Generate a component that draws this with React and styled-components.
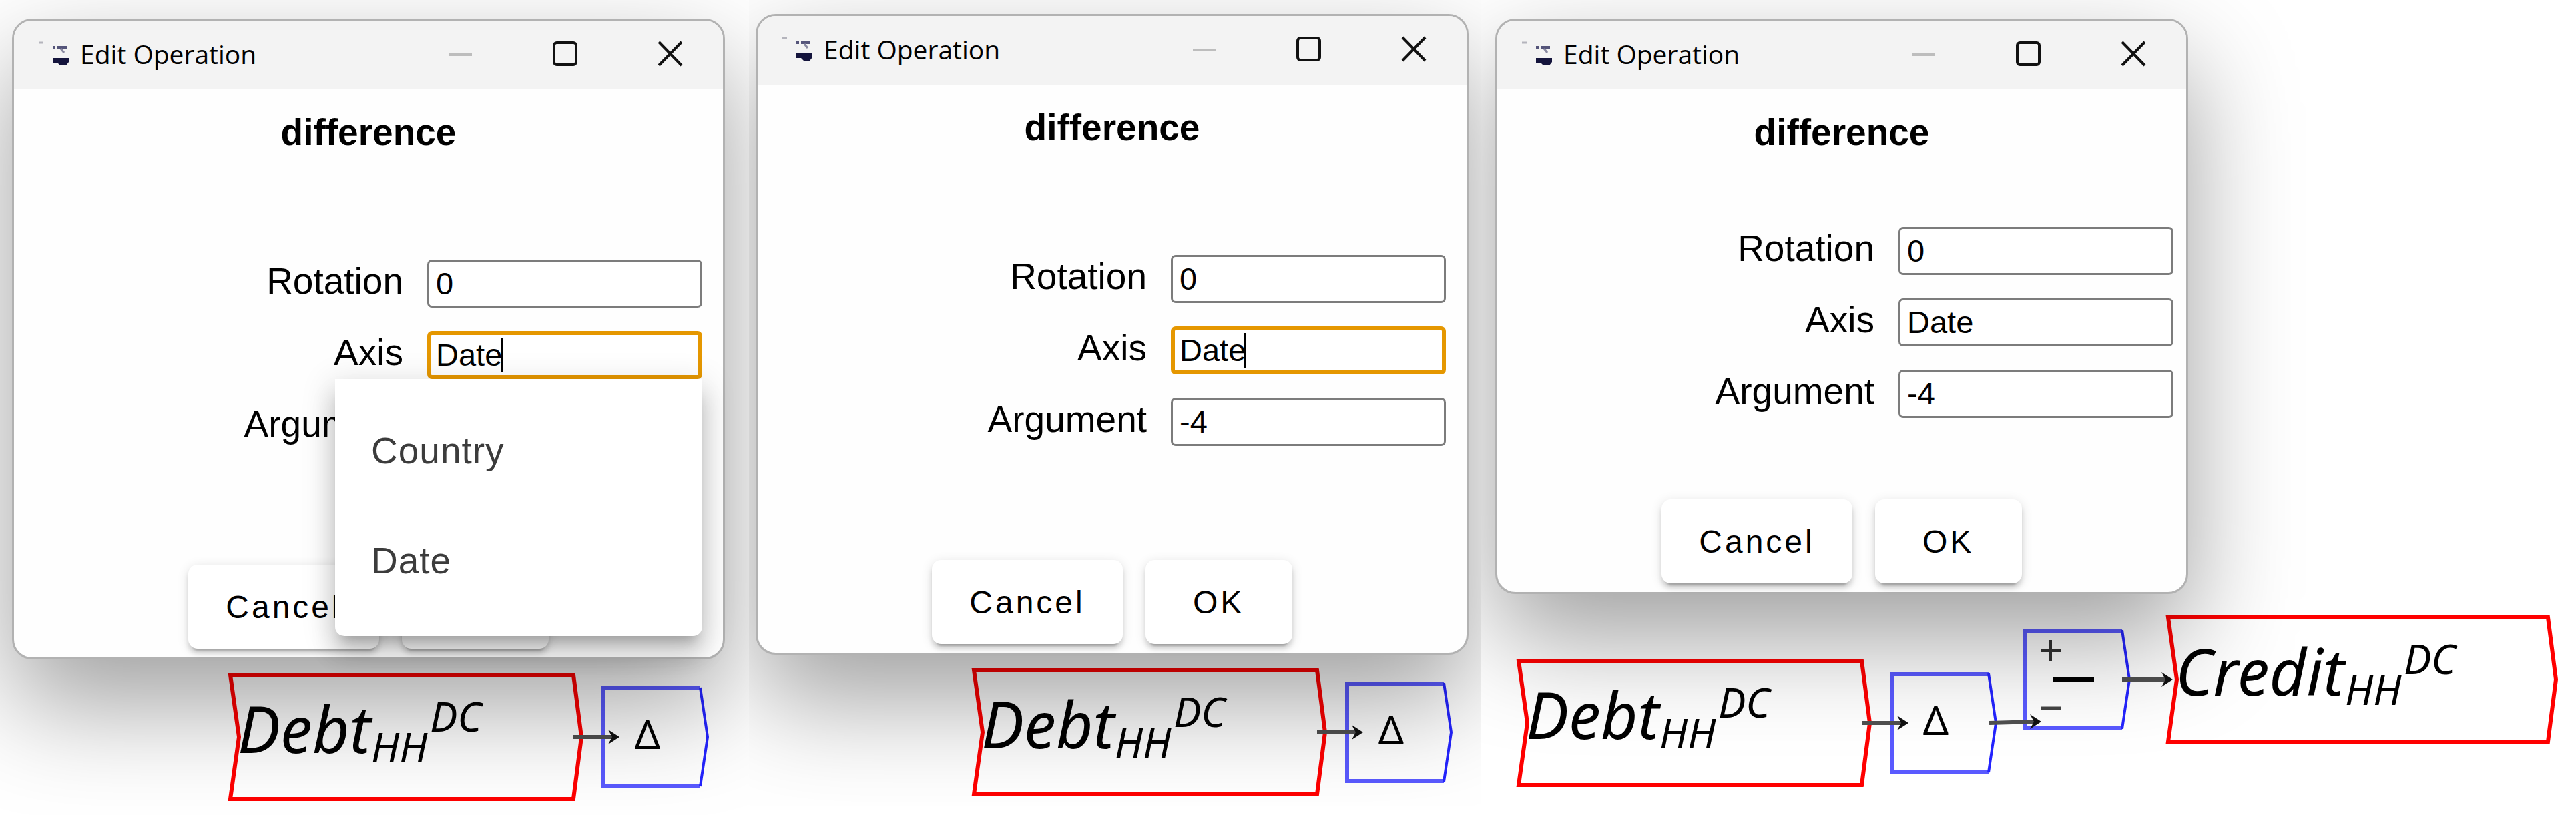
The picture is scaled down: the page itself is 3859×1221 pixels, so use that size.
import React from "react";
import styled, { createGlobalStyle, css } from "styled-components";

const GlobalStyle = createGlobalStyle`
  *, *::before, *::after { box-sizing: border-box; }
  body { margin: 0; background: #fff; }
  button, input { font: inherit; color: inherit; }
`;

const sans = `"Liberation Sans", Arial, sans-serif`;
const humanist = `"Noto Sans", "Open Sans", sans-serif`;

const Page = styled.main`
  display: grid;
  grid-template-columns: 1122fr 1097fr 1640fr;
  align-items: start;
  font-family: ${sans};
  color: #000;
`;

const Step = styled.section`
  position: relative;
  overflow: hidden;
  height: ${(p) => p.$height}px;
  padding: ${(p) => p.$inset};
`;

const Canvas = styled.svg`
  position: absolute;
  top: 0;
  left: 0;
  width: 1640px;
  height: 1221px;
  overflow: visible;
`;

const Dialog = styled.form`
  position: relative;
  display: flex;
  flex-direction: column;
  width: ${(p) => p.$width}px;
  border: 3px solid #b2b2b2;
  border-radius: 30px;
  background: #fefefe;
  box-shadow: 0 66px 160px rgba(0, 0, 0, 0.38);
`;

const TitleBar = styled.header`
  display: flex;
  align-items: center;
  height: 103px;
  padding: 0 1px 4px 35px;
  border-radius: 27px 27px 0 0;
  background: #f3f3f3;
`;

const AppIcon = styled.svg`
  width: 52px;
  height: 44px;
  margin-right: 12px;
`;

const Title = styled.h2`
  flex: 1;
  margin: 0;
  font: 400 39px/56px "Open Sans", "Noto Sans", sans-serif;
`;

const WindowButton = styled.button`
  display: grid;
  place-items: center;
  width: 157px;
  height: 98px;
  padding: 0;
  border: 0;
  background: none;
`;

const Body = styled.div`
  display: flex;
  flex-direction: column;
  padding: 32px ${(p) => p.$side}px 13px;
`;

const Heading = styled.h1`
  margin: 0;
  font-size: 55px;
  line-height: 64px;
  font-weight: 700;
  text-align: center;
`;

const Fields = styled.div`
  display: flex;
  flex-direction: column;
  gap: 35px;
  padding: ${(p) => p.$space}px 0 ${(p) => p.$space + 12}px;
`;

const Field = styled.div`
  display: flex;
  justify-content: flex-end;
  align-items: flex-start;
  gap: 36px;
`;

const Label = styled.label`
  font-size: 55px;
  line-height: 64px;
`;

const Box = styled.div`
  position: relative;
  width: 412px;
`;

const Input = styled.input`
  display: block;
  width: 100%;
  height: 72px;
  padding: 0 10px 2px;
  border: 3px solid #7c7c7c;
  border-radius: 7px;
  outline: 0;
  background: #fff;
  font-size: 47px;
  line-height: 54px;
  ${(p) =>
    p.$active &&
    css`
      padding: 0 7px 2px;
      border: 6px solid #e59700;
    `}
`;

const Caret = styled.span`
  position: absolute;
  top: 10px;
  left: 110px;
  width: 3px;
  height: 52px;
  background: #000;
`;

const Menu = styled.ul`
  position: absolute;
  z-index: 2;
  top: 100%;
  right: 0;
  width: 550px;
  margin: 0;
  padding: 25px 0 30px;
  list-style: none;
  border-radius: 0 0 14px 14px;
  background: #fff;
  box-shadow:
    0 17px 17px -10px rgba(0, 0, 0, 0.2),
    0 28px 35px 3px rgba(0, 0, 0, 0.14),
    0 10px 48px 7px rgba(0, 0, 0, 0.12);
`;

const MenuItem = styled.li`
  padding: 0 54px;
  font-size: 55px;
  line-height: 165px;
  letter-spacing: 1px;
  color: #3c3c3c;
`;

const Actions = styled.div`
  display: flex;
  justify-content: center;
  gap: 34px;
`;

const ActionButton = styled.button`
  min-width: 220px;
  height: 126px;
  padding: 0 56px;
  border: 0;
  border-radius: 14px;
  background: #fff;
  font-size: 48px;
  letter-spacing: 4px;
  box-shadow:
    0 10px 3px -7px rgba(0, 0, 0, 0.2),
    0 7px 7px rgba(0, 0, 0, 0.14),
    0 3px 17px rgba(0, 0, 0, 0.12);
`;

const NameText = styled.text`
  font-family: ${humanist};
  font-style: italic;
  font-size: ${(p) => (p.$small ? 62 : 96)}px;
`;

const DeltaText = styled.text`
  font-family: ${humanist};
  font-size: 60px;
  text-anchor: middle;
`;

function Variable({ x, y, width, name, nameWidth }) {
  const r = x + width;
  const end = x + nameWidth;
  return (
    <g>
      <path
        d={`M${x} ${y - 93}H${r}L${r + 12} ${y}L${r} ${y + 93}H${x}L${x + 13} ${y}Z`}
        fill="none"
        stroke="#ff0000"
        strokeWidth="6"
      />
      <NameText x={x + 11} y={y + 24}>{name}</NameText>
      <NameText $small x={end} y={y + 38}>HH</NameText>
      <NameText $small x={end + 88} y={y - 8}>DC</NameText>
    </g>
  );
}

function Operation({ x, y, children }) {
  return (
    <g>
      <path d={`M${x + 145} ${y - 73}H${x}V${y + 73}H${x + 145}`} fill="none" stroke="#5a5aff" strokeWidth="6" />
      <path d={`M${x + 145} ${y - 74}L${x + 156} ${y}L${x + 145} ${y + 74}`} fill="none" stroke="#2424ff" strokeWidth="4" />
      {children}
    </g>
  );
}

function Delta({ x, y }) {
  return (
    <Operation x={x} y={y}>
      <DeltaText x={x + 66} y={y + 18}>Δ</DeltaText>
    </Operation>
  );
}

function Wire({ x1, y1, x2, y2 }) {
  return (
    <g>
      <path d={`M${x1} ${y1}L${x2 - 8} ${y2}`} stroke="#505050" strokeWidth="6" />
      <path d={`M${x2} ${y2}L${x2 - 17} ${y2 - 11}L${x2 - 11} ${y2}L${x2 - 17} ${y2 + 11}Z`} fill="#111" />
    </g>
  );
}

function EditDialog({ id, width, side, space, axisActive, open }) {
  return (
    <Dialog $width={width} onSubmit={(e) => e.preventDefault()}>
      <TitleBar>
        <AppIcon viewBox="0 0 52 44" aria-hidden="true">
          <path d="M2 5h7" stroke="#b4b4bc" strokeWidth="3" />
          <path d="M23 12h4M30 12h14" stroke="#55557a" strokeWidth="4" />
          <path d="M35 14l5 6" stroke="#8888a0" strokeWidth="3" />
          <path d="M23 28h24v6l-4 5h-9l-4-4h-7z" fill="#14143c" />
        </AppIcon>
        <Title>Edit Operation</Title>
        <WindowButton type="button" aria-label="Minimize">
          <svg width="40" height="40" viewBox="0 0 40 40">
            <path d="M3 21H37" stroke="#bdbdbd" strokeWidth="4" />
          </svg>
        </WindowButton>
        <WindowButton type="button" aria-label="Maximize">
          <svg width="40" height="40" viewBox="0 0 40 40" fill="none">
            <rect x="3" y="3" width="33" height="33" rx="4" stroke="#111" strokeWidth="4" />
          </svg>
        </WindowButton>
        <WindowButton type="button" aria-label="Close">
          <svg width="40" height="40" viewBox="0 0 40 40">
            <path d="M3 2L37 37M37 2L3 37" stroke="#111" strokeWidth="4" />
          </svg>
        </WindowButton>
      </TitleBar>
      <Body $side={side}>
        <Heading>difference</Heading>
        <Fields $space={space}>
          <Field>
            <Label htmlFor={`${id}-rotation`}>Rotation</Label>
            <Box>
              <Input id={`${id}-rotation`} defaultValue="0" />
            </Box>
          </Field>
          <Field>
            <Label htmlFor={`${id}-axis`}>Axis</Label>
            <Box>
              <Input id={`${id}-axis`} defaultValue="Date" $active={axisActive} />
              {axisActive && <Caret />}
              {open && (
                <Menu>
                  <MenuItem>Country</MenuItem>
                  <MenuItem>Date</MenuItem>
                </Menu>
              )}
            </Box>
          </Field>
          <Field>
            <Label htmlFor={`${id}-argument`}>Argument</Label>
            <Box>
              <Input id={`${id}-argument`} defaultValue="-4" />
            </Box>
          </Field>
        </Fields>
        <Actions>
          <ActionButton type="button">Cancel</ActionButton>
          <ActionButton type="submit">OK</ActionButton>
        </Actions>
      </Body>
    </Dialog>
  );
}

export default function App() {
  return (
    <>
      <GlobalStyle />
      <Page>
        <Step $height={1221} $inset="28px 0 0 18px">
          <Canvas>
            <Variable x={345} y={1104} width={514} name="Debt" nameWidth={211} />
            <Delta x={904} y={1104} />
            <Wire x1={859} y1={1104} x2={928} y2={1104} />
          </Canvas>
          <EditDialog id="first" width={1068} side={31} space={159} axisActive open />
        </Step>
        <Step $height={1207} $inset="21px 0 0 10px">
          <Canvas>
            <Variable x={337} y={1097} width={514} name="Debt" nameWidth={211} />
            <Delta x={896} y={1097} />
            <Wire x1={851} y1={1097} x2={920} y2={1097} />
          </Canvas>
          <EditDialog id="second" width={1068} side={31} space={159} axisActive />
        </Step>
        <Step $height={1221} $inset="28px 0 0 21px">
          <Canvas>
            <Variable x={56} y={1083} width={514} name="Debt" nameWidth={211} />
            <Delta x={615} y={1083} />
            <Operation x={815} y={1018}>
              <path d="M838 975h31M853 959v31" stroke="#333" strokeWidth="4" />
              <path d="M857 1018h61" stroke="#000" strokeWidth="8" />
              <path d="M838 1061h31" stroke="#444" strokeWidth="5" />
            </Operation>
            <Variable x={1029} y={1018} width={569} name="Credit" nameWidth={265} />
            <Wire x1={571} y1={1083} x2={640} y2={1083} />
            <Wire x1={761} y1={1083} x2={839} y2={1081} />
            <Wire x1={960} y1={1018} x2={1036} y2={1018} />
          </Canvas>
          <EditDialog id="third" width={1038} side={19} space={110} />
        </Step>
      </Page>
    </>
  );
}
